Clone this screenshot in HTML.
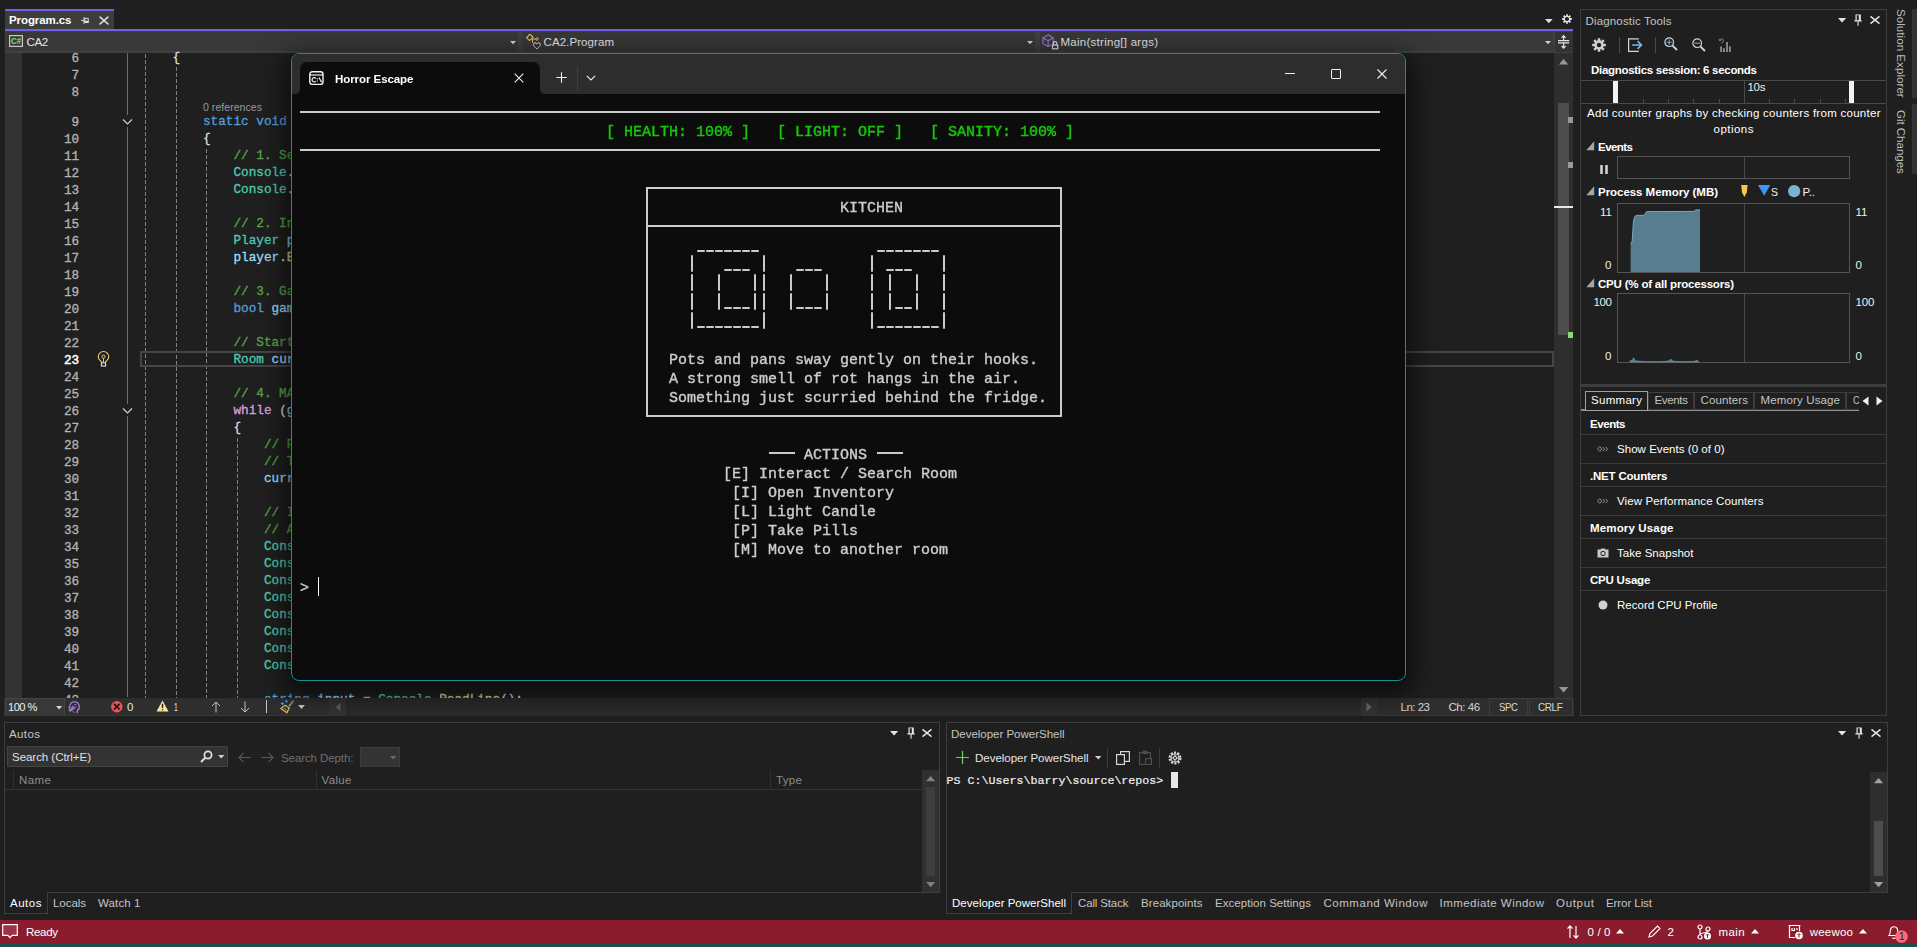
<!DOCTYPE html>
<html><head><meta charset="utf-8"><title>Program.cs - CA2</title>
<style>
html,body{margin:0;padding:0;background:#1f1f1f;}
body{width:1917px;height:947px;position:relative;overflow:hidden;font-family:"Liberation Sans",sans-serif;font-size:12px;color:#d6d6d6;}
body div,body svg,.t{position:absolute;box-sizing:border-box;}
.t{white-space:pre;display:block;}
svg{overflow:visible;}
.m{font-family:"Liberation Mono",monospace;-webkit-text-stroke:0.32px currentColor;}
pre{margin:0;font-family:"Liberation Mono",monospace;}

</style></head>
<body>
<div style="left:5px;top:9px;width:109px;height:2px;background:#7160e8;"></div>
<div style="left:5px;top:11px;width:109px;height:18px;background:#3d3d3d;"></div>
<span class="t" style="font-size:11.52px;color:#ffffff;height:17px;line-height:17px;top:11.9px;font-weight:700;left:9px;letter-spacing:-0.097px;">Program.cs</span>
<svg style="left:81.2px;top:17px;" width="8" height="7" viewBox="0 0 8 7"><path d="M0 3.5H2.6" stroke="#e0e0e0" stroke-width="0.9"/><path d="M3 0.2V6.8" stroke="#e0e0e0" stroke-width="1.1"/><rect x="3.9" y="1.3" width="3.3" height="4.2" fill="none" stroke="#e0e0e0" stroke-width="0.9"/><rect x="3.5" y="3.8" width="4.1" height="2" fill="#e0e0e0"/></svg>
<svg style="left:99px;top:15.5px;" width="10" height="9" viewBox="0 0 10 9"><path d="M0.6 0.6L9.4 8.4M9.4 0.6L0.6 8.4" stroke="#dcdcdc" stroke-width="1.5" fill="none"/></svg>
<div style="left:5px;top:29px;width:1568px;height:2px;background:#7160e8;"></div>
<svg style="left:1545.2px;top:18.8px;" width="8" height="5" viewBox="0 0 8 5"><path d="M0 0H7.7L3.85 4.2Z" fill="#e0e0e0"/></svg>
<svg style="left:1562px;top:14px;" width="10" height="10" viewBox="0 0 14 14"><g fill="none" stroke="#e0e0e0" stroke-width="2.5"><path d="M7 0.2V13.8M0.2 7H13.8M2.2 2.2L11.8 11.8M11.8 2.2L2.2 11.8"/></g><circle cx="7" cy="7" r="4.7" fill="#e0e0e0"/><circle cx="7" cy="7" r="2.9" fill="#1f1f1f"/><circle cx="7" cy="7" r="1.9" fill="none" stroke="#e0e0e0" stroke-width="0.0"/></svg>
<div style="left:5px;top:31px;width:1568px;height:22px;background:#404040;"></div>
<div style="left:6px;top:32px;width:512px;height:19px;background:#383838;"></div>
<div style="left:523px;top:32px;width:512px;height:19px;background:#383838;"></div>
<div style="left:1040px;top:32px;width:513px;height:19px;background:#383838;"></div>
<svg style="left:9px;top:35px;" width="14" height="12" viewBox="0 0 14 12"><rect x="0.6" y="0.6" width="12.8" height="10.8" fill="#3a3a3a" stroke="#c8c8c8" stroke-width="1.2"/><text x="1.9" y="9.3" font-family="Liberation Sans" font-size="8.6" font-weight="700" fill="#85e085" textLength="10.2" lengthAdjust="spacingAndGlyphs">C#</text></svg>
<span class="t" style="font-size:11.52px;color:#e6e6e6;height:17px;line-height:17px;top:33.5px;left:26.5px;letter-spacing:-0.353px;">CA2</span>
<svg style="left:510.2px;top:41px;" width="6" height="4" viewBox="0 0 6 4"><path d="M0 0H6L3 3.3Z" fill="#d0d0d0"/></svg>
<svg style="left:526px;top:33px;" width="16" height="17" viewBox="0 0 16 17"><path d="M0.5 4.8L3.8 1.3L7 4.1L3.7 7.6Z" fill="none" stroke="#e8c070" stroke-width="1.1"/><path d="M5.6 6H9.6M6.5 6V9.8" stroke="#e8c070" stroke-width="1" fill="none"/><circle cx="10.9" cy="6" r="1.2" fill="none" stroke="#e8c070" stroke-width="0.9"/><path d="M10.9 15.8C8.6 14 7.2 12.8 7.4 11.2C7.7 9.4 10 9.3 10.9 10.9C11.8 9.3 14.1 9.4 14.4 11.2C14.6 12.8 13.2 14 10.9 15.8Z" fill="#383838" stroke="#dedede" stroke-width="1"/></svg>
<span class="t" style="font-size:11.52px;color:#e6e6e6;height:17px;line-height:17px;top:33.9px;left:543.5px;letter-spacing:0.073px;">CA2.Program</span>
<svg style="left:1027.2px;top:41px;" width="6" height="4" viewBox="0 0 6 4"><path d="M0 0H6L3 3.3Z" fill="#d0d0d0"/></svg>
<svg style="left:1042px;top:34px;" width="17" height="16" viewBox="0 0 17 16"><path d="M6.1 0.9L11.2 3.8V9.7L6.1 12.6L1 9.7V3.8Z M1 3.8L6.1 6.7L11.2 3.8M6.1 6.7V12.6" fill="none" stroke="#9670c0" stroke-width="1.3"/><rect x="9.3" y="9.9" width="7.6" height="6" fill="#383838"/><rect x="10.5" y="11" width="5.2" height="3.8" fill="none" stroke="#dcdcdc" stroke-width="1.3"/><path d="M11.4 10.8V9.3A1.7 1.7 0 0 1 14.8 9.3V10.8" fill="none" stroke="#dcdcdc" stroke-width="1.2"/></svg>
<span class="t" style="font-size:11.52px;color:#e6e6e6;height:17px;line-height:17px;top:33.9px;left:1060.5px;letter-spacing:0.261px;">Main(string[] args)</span>
<svg style="left:1544.8px;top:41px;" width="6" height="4" viewBox="0 0 6 4"><path d="M0 0H6L3 3.3Z" fill="#d0d0d0"/></svg>
<div style="left:1555px;top:32px;width:18px;height:20px;background:#323232;"></div>
<svg style="left:1558px;top:34.5px;" width="12" height="14" viewBox="0 0 12 14"><path d="M0 5.6H11.2M0 7.9H11.2M5.6 0.8V5M5.6 8.5V13M3.6 2.8L5.6 0.7L7.6 2.8M3.6 11L5.6 13.1L7.6 11" stroke="#e4e4e4" stroke-width="1.15" fill="none"/></svg>
<div style="left:5px;top:53px;width:17px;height:645px;background:#333333;"></div>
<div style="left:1554.2px;top:53px;width:18.8px;height:645px;background:#2e2e2e;"></div>
<svg style="left:1558.8px;top:58.8px;" width="10" height="6" viewBox="0 0 10 6"><path d="M0 5.5H9.2L4.6 0Z" fill="#999999"/></svg>
<svg style="left:1558.8px;top:686.7px;" width="10" height="6" viewBox="0 0 10 6"><path d="M0 0H9.2L4.6 5.5Z" fill="#999999"/></svg>
<div style="left:1558px;top:103px;width:11px;height:232px;background:#4d4d4d;"></div>
<div style="left:1568px;top:117px;width:5px;height:6px;background:#9a9a9a;"></div>
<div style="left:1568px;top:162px;width:5px;height:6px;background:#9a9a9a;"></div>
<div style="left:1554px;top:206px;width:19px;height:2px;background:#e8e8e8;"></div>
<div style="left:1568px;top:332px;width:5px;height:6px;background:#8bd67a;"></div>
<div style="left:127px;top:53px;width:1px;height:644px;background:#6e6e6e;"></div>
<div style="left:145px;top:54.2px;width:1px;height:643.8px;background:repeating-linear-gradient(to bottom,#808080 0,#808080 4.2px,transparent 4.2px,transparent 6px);"></div>
<div style="left:176px;top:67.3px;width:1px;height:630.7px;background:repeating-linear-gradient(to bottom,#808080 0,#808080 4.2px,transparent 4.2px,transparent 6px);"></div>
<div style="left:206px;top:148.5px;width:1px;height:549.5px;background:repeating-linear-gradient(to bottom,#808080 0,#808080 4.2px,transparent 4.2px,transparent 6px);"></div>
<div style="left:237px;top:437.7px;width:1px;height:260.3px;background:repeating-linear-gradient(to bottom,#808080 0,#808080 4.2px,transparent 4.2px,transparent 6px);"></div>
<div style="left:140px;top:351px;width:1414px;height:16px;border:2px solid #464646;"></div>
<span class="t m" style="font-size:12.7px;color:#b4b4b4;height:17px;line-height:17px;top:50px;right:1837.8px;">6</span>
<span class="t m" style="font-size:12.7px;color:#dcdcdc;height:17px;line-height:17px;top:48.5px;left:172.48px;letter-spacing:0px;">{</span>
<span class="t m" style="font-size:12.7px;color:#b4b4b4;height:17px;line-height:17px;top:67px;right:1837.8px;">7</span>
<span class="t m" style="font-size:12.7px;color:#b4b4b4;height:17px;line-height:17px;top:84px;right:1837.8px;">8</span>
<span class="t m" style="font-size:12.7px;color:#b4b4b4;height:17px;line-height:17px;top:114px;right:1837.8px;">9</span>
<span class="t m" style="font-size:12.7px;color:#569cd6;height:17px;line-height:17px;top:112.5px;left:202.96px;letter-spacing:0px;">static</span>
<span class="t m" style="font-size:12.7px;color:#569cd6;height:17px;line-height:17px;top:112.5px;left:256.3px;letter-spacing:0px;">void</span>
<span class="t m" style="font-size:12.7px;color:#b4b4b4;height:17px;line-height:17px;top:131px;right:1837.8px;">10</span>
<span class="t m" style="font-size:12.7px;color:#dcdcdc;height:17px;line-height:17px;top:129.5px;left:202.96px;letter-spacing:0px;">{</span>
<span class="t m" style="font-size:12.7px;color:#b4b4b4;height:17px;line-height:17px;top:148px;right:1837.8px;">11</span>
<span class="t m" style="font-size:12.7px;color:#57a64a;height:17px;line-height:17px;top:146.5px;left:233.44px;letter-spacing:0px;">// 1. Set</span>
<span class="t m" style="font-size:12.7px;color:#b4b4b4;height:17px;line-height:17px;top:165px;right:1837.8px;">12</span>
<span class="t m" style="font-size:12.7px;color:#4ec9b0;height:17px;line-height:17px;top:163.5px;left:233.44px;letter-spacing:0px;">Console</span>
<span class="t m" style="font-size:12.7px;color:#dcdcdc;height:17px;line-height:17px;top:163.5px;left:286.78px;letter-spacing:0px;">.</span>
<span class="t m" style="font-size:12.7px;color:#b4b4b4;height:17px;line-height:17px;top:182px;right:1837.8px;">13</span>
<span class="t m" style="font-size:12.7px;color:#4ec9b0;height:17px;line-height:17px;top:180.5px;left:233.44px;letter-spacing:0px;">Console</span>
<span class="t m" style="font-size:12.7px;color:#dcdcdc;height:17px;line-height:17px;top:180.5px;left:286.78px;letter-spacing:0px;">.</span>
<span class="t m" style="font-size:12.7px;color:#b4b4b4;height:17px;line-height:17px;top:199px;right:1837.8px;">14</span>
<span class="t m" style="font-size:12.7px;color:#b4b4b4;height:17px;line-height:17px;top:216px;right:1837.8px;">15</span>
<span class="t m" style="font-size:12.7px;color:#57a64a;height:17px;line-height:17px;top:214.5px;left:233.44px;letter-spacing:0px;">// 2. Ini</span>
<span class="t m" style="font-size:12.7px;color:#b4b4b4;height:17px;line-height:17px;top:233px;right:1837.8px;">16</span>
<span class="t m" style="font-size:12.7px;color:#4ec9b0;height:17px;line-height:17px;top:231.5px;left:233.44px;letter-spacing:0px;">Player</span>
<span class="t m" style="font-size:12.7px;color:#9cdcfe;height:17px;line-height:17px;top:231.5px;left:286.78px;letter-spacing:0px;">p</span>
<span class="t m" style="font-size:12.7px;color:#b4b4b4;height:17px;line-height:17px;top:250px;right:1837.8px;">17</span>
<span class="t m" style="font-size:12.7px;color:#9cdcfe;height:17px;line-height:17px;top:248.5px;left:233.44px;letter-spacing:0px;">player</span>
<span class="t m" style="font-size:12.7px;color:#dcdcdc;height:17px;line-height:17px;top:248.5px;left:279.16px;letter-spacing:0px;">.</span>
<span class="t m" style="font-size:12.7px;color:#dcdcaa;height:17px;line-height:17px;top:248.5px;left:286.78px;letter-spacing:0px;">E</span>
<span class="t m" style="font-size:12.7px;color:#b4b4b4;height:17px;line-height:17px;top:267px;right:1837.8px;">18</span>
<span class="t m" style="font-size:12.7px;color:#b4b4b4;height:17px;line-height:17px;top:284px;right:1837.8px;">19</span>
<span class="t m" style="font-size:12.7px;color:#57a64a;height:17px;line-height:17px;top:282.5px;left:233.44px;letter-spacing:0px;">// 3. Gam</span>
<span class="t m" style="font-size:12.7px;color:#b4b4b4;height:17px;line-height:17px;top:301px;right:1837.8px;">20</span>
<span class="t m" style="font-size:12.7px;color:#569cd6;height:17px;line-height:17px;top:299.5px;left:233.44px;letter-spacing:0px;">bool</span>
<span class="t m" style="font-size:12.7px;color:#9cdcfe;height:17px;line-height:17px;top:299.5px;left:271.54px;letter-spacing:0px;">game</span>
<span class="t m" style="font-size:12.7px;color:#b4b4b4;height:17px;line-height:17px;top:318px;right:1837.8px;">21</span>
<span class="t m" style="font-size:12.7px;color:#b4b4b4;height:17px;line-height:17px;top:335px;right:1837.8px;">22</span>
<span class="t m" style="font-size:12.7px;color:#57a64a;height:17px;line-height:17px;top:333.5px;left:233.44px;letter-spacing:0px;">// Start</span>
<span class="t m" style="font-size:12.7px;color:#ffffff;height:17px;line-height:17px;top:352px;right:1837.8px;-webkit-text-stroke:0.5px #ffffff;">23</span>
<span class="t m" style="font-size:12.7px;color:#4ec9b0;height:17px;line-height:17px;top:350.5px;left:233.44px;letter-spacing:0px;">Room</span>
<span class="t m" style="font-size:12.7px;color:#9cdcfe;height:17px;line-height:17px;top:350.5px;left:271.54px;letter-spacing:0px;">curr</span>
<span class="t m" style="font-size:12.7px;color:#b4b4b4;height:17px;line-height:17px;top:369px;right:1837.8px;">24</span>
<span class="t m" style="font-size:12.7px;color:#b4b4b4;height:17px;line-height:17px;top:386px;right:1837.8px;">25</span>
<span class="t m" style="font-size:12.7px;color:#57a64a;height:17px;line-height:17px;top:384.5px;left:233.44px;letter-spacing:0px;">// 4. MAI</span>
<span class="t m" style="font-size:12.7px;color:#b4b4b4;height:17px;line-height:17px;top:403px;right:1837.8px;">26</span>
<span class="t m" style="font-size:12.7px;color:#d8a0df;height:17px;line-height:17px;top:401.5px;left:233.44px;letter-spacing:0px;">while</span>
<span class="t m" style="font-size:12.7px;color:#dcdcdc;height:17px;line-height:17px;top:401.5px;left:279.16px;letter-spacing:0px;">(</span>
<span class="t m" style="font-size:12.7px;color:#9cdcfe;height:17px;line-height:17px;top:401.5px;left:286.78px;letter-spacing:0px;">g</span>
<span class="t m" style="font-size:12.7px;color:#b4b4b4;height:17px;line-height:17px;top:420px;right:1837.8px;">27</span>
<span class="t m" style="font-size:12.7px;color:#dcdcdc;height:17px;line-height:17px;top:418.5px;left:233.44px;letter-spacing:0px;">{</span>
<span class="t m" style="font-size:12.7px;color:#b4b4b4;height:17px;line-height:17px;top:437px;right:1837.8px;">28</span>
<span class="t m" style="font-size:12.7px;color:#57a64a;height:17px;line-height:17px;top:435.5px;left:263.92px;letter-spacing:0px;">// Pr</span>
<span class="t m" style="font-size:12.7px;color:#b4b4b4;height:17px;line-height:17px;top:454px;right:1837.8px;">29</span>
<span class="t m" style="font-size:12.7px;color:#57a64a;height:17px;line-height:17px;top:452.5px;left:263.92px;letter-spacing:0px;">// Th</span>
<span class="t m" style="font-size:12.7px;color:#b4b4b4;height:17px;line-height:17px;top:471px;right:1837.8px;">30</span>
<span class="t m" style="font-size:12.7px;color:#9cdcfe;height:17px;line-height:17px;top:469.5px;left:263.92px;letter-spacing:0px;">curre</span>
<span class="t m" style="font-size:12.7px;color:#b4b4b4;height:17px;line-height:17px;top:488px;right:1837.8px;">31</span>
<span class="t m" style="font-size:12.7px;color:#b4b4b4;height:17px;line-height:17px;top:505px;right:1837.8px;">32</span>
<span class="t m" style="font-size:12.7px;color:#57a64a;height:17px;line-height:17px;top:503.5px;left:263.92px;letter-spacing:0px;">// In</span>
<span class="t m" style="font-size:12.7px;color:#b4b4b4;height:17px;line-height:17px;top:522px;right:1837.8px;">33</span>
<span class="t m" style="font-size:12.7px;color:#57a64a;height:17px;line-height:17px;top:520.5px;left:263.92px;letter-spacing:0px;">// Al</span>
<span class="t m" style="font-size:12.7px;color:#b4b4b4;height:17px;line-height:17px;top:539px;right:1837.8px;">34</span>
<span class="t m" style="font-size:12.7px;color:#4ec9b0;height:17px;line-height:17px;top:537.5px;left:263.92px;letter-spacing:0px;">Conso</span>
<span class="t m" style="font-size:12.7px;color:#b4b4b4;height:17px;line-height:17px;top:556px;right:1837.8px;">35</span>
<span class="t m" style="font-size:12.7px;color:#4ec9b0;height:17px;line-height:17px;top:554.5px;left:263.92px;letter-spacing:0px;">Conso</span>
<span class="t m" style="font-size:12.7px;color:#b4b4b4;height:17px;line-height:17px;top:573px;right:1837.8px;">36</span>
<span class="t m" style="font-size:12.7px;color:#4ec9b0;height:17px;line-height:17px;top:571.5px;left:263.92px;letter-spacing:0px;">Conso</span>
<span class="t m" style="font-size:12.7px;color:#b4b4b4;height:17px;line-height:17px;top:590px;right:1837.8px;">37</span>
<span class="t m" style="font-size:12.7px;color:#4ec9b0;height:17px;line-height:17px;top:588.5px;left:263.92px;letter-spacing:0px;">Conso</span>
<span class="t m" style="font-size:12.7px;color:#b4b4b4;height:17px;line-height:17px;top:607px;right:1837.8px;">38</span>
<span class="t m" style="font-size:12.7px;color:#4ec9b0;height:17px;line-height:17px;top:605.5px;left:263.92px;letter-spacing:0px;">Conso</span>
<span class="t m" style="font-size:12.7px;color:#b4b4b4;height:17px;line-height:17px;top:624px;right:1837.8px;">39</span>
<span class="t m" style="font-size:12.7px;color:#4ec9b0;height:17px;line-height:17px;top:622.5px;left:263.92px;letter-spacing:0px;">Conso</span>
<span class="t m" style="font-size:12.7px;color:#b4b4b4;height:17px;line-height:17px;top:641px;right:1837.8px;">40</span>
<span class="t m" style="font-size:12.7px;color:#4ec9b0;height:17px;line-height:17px;top:639.5px;left:263.92px;letter-spacing:0px;">Conso</span>
<span class="t m" style="font-size:12.7px;color:#b4b4b4;height:17px;line-height:17px;top:658px;right:1837.8px;">41</span>
<span class="t m" style="font-size:12.7px;color:#4ec9b0;height:17px;line-height:17px;top:656.5px;left:263.92px;letter-spacing:0px;">Conso</span>
<span class="t m" style="font-size:12.7px;color:#b4b4b4;height:17px;line-height:17px;top:675px;right:1837.8px;">42</span>
<span class="t m" style="font-size:12.7px;color:#b4b4b4;height:17px;line-height:17px;top:692px;right:1837.8px;">43</span>
<span class="t m" style="font-size:12.7px;color:#569cd6;height:17px;line-height:17px;top:690.5px;left:263.92px;letter-spacing:0px;">string</span>
<span class="t m" style="font-size:12.7px;color:#9cdcfe;height:17px;line-height:17px;top:690.5px;left:317.26px;letter-spacing:0px;">input</span>
<span class="t m" style="font-size:12.7px;color:#b4b4b4;height:17px;line-height:17px;top:690.5px;left:362.98px;letter-spacing:0px;">=</span>
<span class="t m" style="font-size:12.7px;color:#4ec9b0;height:17px;line-height:17px;top:690.5px;left:378.22px;letter-spacing:0px;">Console</span>
<span class="t m" style="font-size:12.7px;color:#dcdcdc;height:17px;line-height:17px;top:690.5px;left:431.56px;letter-spacing:0px;">.</span>
<span class="t m" style="font-size:12.7px;color:#dcdcaa;height:17px;line-height:17px;top:690.5px;left:439.18px;letter-spacing:0px;">ReadLine</span>
<span class="t m" style="font-size:12.7px;color:#dcdcdc;height:17px;line-height:17px;top:690.5px;left:500.14px;letter-spacing:0px;">();</span>
<span class="t" style="font-size:10.56px;color:#9a9a9a;height:15px;line-height:15px;top:99.9px;left:203px;letter-spacing:0.033px;">0 references</span>
<div style="left:122px;top:115px;width:11px;height:12px;background:#1f1f1f;"></div>
<svg style="left:122px;top:117.7px;" width="11" height="8" viewBox="0 0 11 8"><path d="M1 1.5L5.5 6L10 1.5" stroke="#d0d0d0" stroke-width="1.2" fill="none"/></svg>
<div style="left:122px;top:404px;width:11px;height:12px;background:#1f1f1f;"></div>
<svg style="left:122px;top:406.7px;" width="11" height="8" viewBox="0 0 11 8"><path d="M1 1.5L5.5 6L10 1.5" stroke="#d0d0d0" stroke-width="1.2" fill="none"/></svg>
<svg style="left:97px;top:350.6px;" width="13" height="17" viewBox="0 0 13 17"><path d="M4.7 11.6C4.7 9.8 1.2 9 1.2 5.8A5.3 5.3 0 0 1 11.8 5.8C11.8 9 8.3 9.8 8.3 11.6" fill="none" stroke="#e9cf7a" stroke-width="1.1"/><circle cx="6.5" cy="5.6" r="1.6" fill="none" stroke="#e9cf7a" stroke-width="1"/><path d="M6.5 7.2V11.4" stroke="#e9cf7a" stroke-width="1"/><rect x="4.4" y="11.8" width="4.2" height="3.2" fill="none" stroke="#e0e0e0" stroke-width="1.1"/></svg>
<div style="left:4px;top:698px;width:1570px;height:18px;background:#2e2e2e;"></div>
<div style="left:5px;top:698px;width:60px;height:18px;background:#383838;border:1px solid #454545;"></div>
<span class="t" style="font-size:11.52px;color:#f0f0f0;height:17px;line-height:17px;top:698.9px;left:7.5px;letter-spacing:-0.550px;transform-origin:0 50%;transform:scaleX(0.9686);">100 %</span>
<svg style="left:56px;top:706px;" width="7" height="4" viewBox="0 0 7 4"><path d="M0 0H6.2L3.1 3.6Z" fill="#d8d8d8"/></svg>
<svg style="left:68px;top:700.5px;" width="12" height="13" viewBox="0 0 12 13"><path d="M9.2 12.3V9.6C10.8 8.6 11.4 7 11.2 5.2C10.8 2.4 8.6 0.8 6.2 0.9C3.8 1 2.2 2.6 2 4.6L0.9 6.6L2.1 7.1" fill="none" stroke="#a57fd6" stroke-width="1.3"/><path d="M5.8 4.2A1.6 1.6 0 0 1 8.6 4.4M6 6.2H8.4" fill="none" stroke="#a57fd6" stroke-width="0.9"/><path d="M0.8 9.2L2.3 10.6L4.4 8.4A1.8 1.8 0 0 0 6.6 6.4L5.4 7.2L4.7 6.5L5.5 5.3A1.8 1.8 0 0 0 3.4 7.5Z M4.2 9.5L6.8 12.4" fill="#a57fd6" stroke="#a57fd6" stroke-width="0.9"/></svg>
<svg style="left:110.7px;top:701px;" width="12" height="12" viewBox="0 0 12 12"><circle cx="5.8" cy="5.7" r="5.7" fill="#f0505a"/><path d="M3 2.9L8.6 8.5M8.6 2.9L3 8.5" stroke="#151515" stroke-width="1.7"/></svg>
<span class="t" style="font-size:11.52px;color:#e6e6e6;height:17px;line-height:17px;top:698.9px;left:127px;letter-spacing:0.594px;">0</span>
<svg style="left:156.2px;top:700.4px;" width="13" height="12" viewBox="0 0 13 12"><path d="M6.5 0.5L12.5 11.5H0.5Z" fill="#fce4a0"/><path d="M6.5 3.8V8" stroke="#1f1f1f" stroke-width="1.5"/><circle cx="6.5" cy="9.8" r="0.8" fill="#1f1f1f"/></svg>
<span class="t" style="font-size:11.52px;color:#e6e6e6;height:17px;line-height:17px;top:698.9px;left:174px;letter-spacing:-0.550px;transform-origin:0 50%;transform:scaleX(0.5932);">1</span>
<svg style="left:211px;top:701px;" width="10" height="12" viewBox="0 0 10 12"><path d="M5 11.5V1M1 5L5 1L9 5" stroke="#c4c4c4" stroke-width="1" fill="none"/></svg>
<svg style="left:240px;top:701px;" width="10" height="12" viewBox="0 0 10 12"><path d="M5 0.5V11M1 7L5 11L9 7" stroke="#c4c4c4" stroke-width="1" fill="none"/></svg>
<div style="left:266px;top:700px;width:1px;height:13px;background:#c8c8c8;"></div>
<div style="left:4px;top:715px;width:1570px;height:1px;background:#383838;"></div>
<svg style="left:280px;top:699px;" width="15" height="15" viewBox="0 0 15 15"><path d="M9.2 7L13.6 1.7" stroke="#c8c8c8" stroke-width="1.7" stroke-dasharray="1.1 0.5"/><path d="M5 6.3L9.3 8.9L6.8 13.8L1 9.5Z" fill="none" stroke="#d8b46a" stroke-width="1.3"/><path d="M4.2 9.3L6.4 10.8" stroke="#d8b46a" stroke-width="1"/><path d="M2.4 3V6.2M0.8 4.6H4M6.5 1V3.6M5.2 2.3H7.8" stroke="#4aa3e8" stroke-width="1"/></svg>
<svg style="left:298px;top:705px;" width="8" height="5" viewBox="0 0 8 5"><path d="M0 0H7L3.5 4Z" fill="#c8c8c8"/></svg>
<div style="left:329px;top:698px;width:17px;height:18px;background:#333333;"></div>
<div style="left:346px;top:698px;width:1015px;height:18px;background:#2b2b2b;"></div>
<svg style="left:335px;top:702px;" width="6" height="10" viewBox="0 0 6 10"><path d="M5.5 0.5V9.5L0.5 5Z" fill="#5a5a5a"/></svg>
<div style="left:1361px;top:698px;width:17px;height:18px;background:#333333;"></div>
<svg style="left:1366.4px;top:702px;" width="6" height="10" viewBox="0 0 6 10"><path d="M0.5 0.5V9.5L5.5 5Z" fill="#6a6a6a"/></svg>
<span class="t" style="font-size:11.52px;color:#d6d6d6;height:17px;line-height:17px;top:698.9px;left:1400.5px;letter-spacing:-0.506px;">Ln: 23</span>
<span class="t" style="font-size:11.52px;color:#d6d6d6;height:17px;line-height:17px;top:698.9px;left:1448.5px;letter-spacing:-0.447px;">Ch: 46</span>
<div style="left:1489px;top:698px;width:39px;height:18px;border:1px solid #3d3d3d;"></div>
<span class="t" style="font-size:11.52px;color:#d6d6d6;height:17px;line-height:17px;top:698.9px;left:1499.3px;letter-spacing:-0.550px;transform-origin:0 50%;transform:scaleX(0.8367);">SPC</span>
<div style="left:1528.5px;top:698px;width:44px;height:18px;border:1px solid #3d3d3d;"></div>
<span class="t" style="font-size:11.52px;color:#d6d6d6;height:17px;line-height:17px;top:698.9px;left:1538.4px;letter-spacing:-0.550px;transform-origin:0 50%;transform:scaleX(0.8724);">CRLF</span>
<div style="left:291px;top:53px;width:1115px;height:628px;background:#0c0c0c;border:1px solid #11929b;border-radius:8px;box-shadow:0 8px 26px 5px rgba(0,0,0,0.68);overflow:hidden;"><div style="left:0;top:0;width:1113px;height:40px;background:#2d2d2d;"></div><div style="left:8px;top:8px;width:240px;height:33px;background:#0c0c0c;border-radius:7px 7px 0 0;"></div><div style="left:2px;top:34px;width:6px;height:6px;background:radial-gradient(circle at 0 0,#2d2d2d 6px,#0c0c0c 6.5px);"></div><div style="left:248px;top:34px;width:6px;height:6px;background:radial-gradient(circle at 100% 0,#2d2d2d 6px,#0c0c0c 6.5px);"></div></div>
<svg style="left:309px;top:71px;" width="15" height="14" viewBox="0 0 15 14"><rect x="0.8" y="0.8" width="13.2" height="12.6" rx="2.4" fill="#0c0c0c" stroke="#f4f4f4" stroke-width="1.4"/><path d="M1 4H14" stroke="#f4f4f4" stroke-width="1.2"/><path d="M6.7 7.5A2 2.2 0 1 0 6.7 10.1" fill="none" stroke="#f4f4f4" stroke-width="1.2"/><path d="M8.3 7.3V8.4M8.3 9.4V10.5" stroke="#f4f4f4" stroke-width="1.1"/><path d="M9.9 6.5L12.6 11.1" stroke="#f4f4f4" stroke-width="1.2"/></svg>
<span class="t" style="font-size:11.52px;color:#ffffff;height:17px;line-height:17px;top:70.7px;font-weight:700;left:335px;letter-spacing:-0.073px;will-change:transform;">Horror Escape</span>
<svg style="left:514px;top:73px;" width="10" height="10" viewBox="0 0 10 10"><path d="M0.7 0.7L9.3 9.3M9.3 0.7L0.7 9.3" stroke="#f0f0f0" stroke-width="1.1" fill="none"/></svg>
<svg style="left:556px;top:72px;" width="11" height="11" viewBox="0 0 11 11"><path d="M5.5 0.3V10.7M0.3 5.5H10.7" stroke="#f0f0f0" stroke-width="1.1" fill="none"/></svg>
<div style="left:577px;top:66px;width:1px;height:24px;background:#3e3e3e;"></div>
<svg style="left:586px;top:75px;" width="10" height="6" viewBox="0 0 10 6"><path d="M0.8 0.8L5 5L9.2 0.8" stroke="#f0f0f0" stroke-width="1.1" fill="none"/></svg>
<div style="left:1285px;top:73px;width:10px;height:1px;background:#f0f0f0;"></div>
<div style="left:1331px;top:69px;width:10px;height:10px;border:1px solid #f0f0f0;border-radius:1px;"></div>
<svg style="left:1377px;top:69px;" width="10" height="10" viewBox="0 0 10 10"><path d="M0.5 0.5L9.5 9.5M9.5 0.5L0.5 9.5" stroke="#f0f0f0" stroke-width="1.1" fill="none"/></svg>
<div style="left:300px;top:111px;width:1080px;height:2px;background:#cccccc;"></div>
<div style="left:300px;top:149px;width:1080px;height:2px;background:#cccccc;"></div>
<span class="t m" style="font-size:15px;color:#16c60c;height:19px;line-height:19px;top:122.8px;left:606px;-webkit-text-stroke:0.45px #16c60c;will-change:transform;">[ HEALTH: 100% ]   [ LIGHT: OFF ]   [ SANITY: 100% ]</span>
<div style="left:645.5px;top:186.5px;width:416.0px;height:230.5px;border:2px solid #cccccc;"></div>
<div style="left:645.5px;top:224.5px;width:416.0px;height:2px;background:#cccccc;"></div>
<span class="t m" style="font-size:15px;color:#cccccc;height:19px;line-height:19px;top:198.8px;left:840px;will-change:transform;-webkit-text-stroke:0.38px #cccccc;">KITCHEN</span>
<div style="left:696.5px;top:249.9px;width:8.1px;height:2.1px;background:#cacaca;border-radius:1px;"></div>
<div style="left:705.5px;top:249.9px;width:8.1px;height:2.1px;background:#cacaca;border-radius:1px;"></div>
<div style="left:714.5px;top:249.9px;width:8.1px;height:2.1px;background:#cacaca;border-radius:1px;"></div>
<div style="left:723.5px;top:249.9px;width:8.1px;height:2.1px;background:#cacaca;border-radius:1px;"></div>
<div style="left:732.5px;top:249.9px;width:8.1px;height:2.1px;background:#cacaca;border-radius:1px;"></div>
<div style="left:741.5px;top:249.9px;width:8.1px;height:2.1px;background:#cacaca;border-radius:1px;"></div>
<div style="left:750.5px;top:249.9px;width:8.1px;height:2.1px;background:#cacaca;border-radius:1px;"></div>
<div style="left:876.5px;top:249.9px;width:8.1px;height:2.1px;background:#cacaca;border-radius:1px;"></div>
<div style="left:885.5px;top:249.9px;width:8.1px;height:2.1px;background:#cacaca;border-radius:1px;"></div>
<div style="left:894.5px;top:249.9px;width:8.1px;height:2.1px;background:#cacaca;border-radius:1px;"></div>
<div style="left:903.5px;top:249.9px;width:8.1px;height:2.1px;background:#cacaca;border-radius:1px;"></div>
<div style="left:912.5px;top:249.9px;width:8.1px;height:2.1px;background:#cacaca;border-radius:1px;"></div>
<div style="left:921.5px;top:249.9px;width:8.1px;height:2.1px;background:#cacaca;border-radius:1px;"></div>
<div style="left:930.5px;top:249.9px;width:8.1px;height:2.1px;background:#cacaca;border-radius:1px;"></div>
<div style="left:690.8px;top:254.9px;width:2.1px;height:17px;background:#cacaca;border-radius:1px;"></div>
<div style="left:723.5px;top:268.9px;width:8.1px;height:2.1px;background:#cacaca;border-radius:1px;"></div>
<div style="left:732.5px;top:268.9px;width:8.1px;height:2.1px;background:#cacaca;border-radius:1px;"></div>
<div style="left:741.5px;top:268.9px;width:8.1px;height:2.1px;background:#cacaca;border-radius:1px;"></div>
<div style="left:762.8px;top:254.9px;width:2.1px;height:17px;background:#cacaca;border-radius:1px;"></div>
<div style="left:795.5px;top:268.9px;width:8.1px;height:2.1px;background:#cacaca;border-radius:1px;"></div>
<div style="left:804.5px;top:268.9px;width:8.1px;height:2.1px;background:#cacaca;border-radius:1px;"></div>
<div style="left:813.5px;top:268.9px;width:8.1px;height:2.1px;background:#cacaca;border-radius:1px;"></div>
<div style="left:870.8px;top:254.9px;width:2.1px;height:17px;background:#cacaca;border-radius:1px;"></div>
<div style="left:885.5px;top:268.9px;width:8.1px;height:2.1px;background:#cacaca;border-radius:1px;"></div>
<div style="left:894.5px;top:268.9px;width:8.1px;height:2.1px;background:#cacaca;border-radius:1px;"></div>
<div style="left:903.5px;top:268.9px;width:8.1px;height:2.1px;background:#cacaca;border-radius:1px;"></div>
<div style="left:942.8px;top:254.9px;width:2.1px;height:17px;background:#cacaca;border-radius:1px;"></div>
<div style="left:690.8px;top:273.9px;width:2.1px;height:17px;background:#cacaca;border-radius:1px;"></div>
<div style="left:717.8px;top:273.9px;width:2.1px;height:17px;background:#cacaca;border-radius:1px;"></div>
<div style="left:753.8px;top:273.9px;width:2.1px;height:17px;background:#cacaca;border-radius:1px;"></div>
<div style="left:762.8px;top:273.9px;width:2.1px;height:17px;background:#cacaca;border-radius:1px;"></div>
<div style="left:789.8px;top:273.9px;width:2.1px;height:17px;background:#cacaca;border-radius:1px;"></div>
<div style="left:825.8px;top:273.9px;width:2.1px;height:17px;background:#cacaca;border-radius:1px;"></div>
<div style="left:870.8px;top:273.9px;width:2.1px;height:17px;background:#cacaca;border-radius:1px;"></div>
<div style="left:888.8px;top:273.9px;width:2.1px;height:17px;background:#cacaca;border-radius:1px;"></div>
<div style="left:915.8px;top:273.9px;width:2.1px;height:17px;background:#cacaca;border-radius:1px;"></div>
<div style="left:942.8px;top:273.9px;width:2.1px;height:17px;background:#cacaca;border-radius:1px;"></div>
<div style="left:690.8px;top:292.9px;width:2.1px;height:17px;background:#cacaca;border-radius:1px;"></div>
<div style="left:717.8px;top:292.9px;width:2.1px;height:17px;background:#cacaca;border-radius:1px;"></div>
<div style="left:723.5px;top:306.9px;width:8.1px;height:2.1px;background:#cacaca;border-radius:1px;"></div>
<div style="left:732.5px;top:306.9px;width:8.1px;height:2.1px;background:#cacaca;border-radius:1px;"></div>
<div style="left:741.5px;top:306.9px;width:8.1px;height:2.1px;background:#cacaca;border-radius:1px;"></div>
<div style="left:753.8px;top:292.9px;width:2.1px;height:17px;background:#cacaca;border-radius:1px;"></div>
<div style="left:762.8px;top:292.9px;width:2.1px;height:17px;background:#cacaca;border-radius:1px;"></div>
<div style="left:789.8px;top:292.9px;width:2.1px;height:17px;background:#cacaca;border-radius:1px;"></div>
<div style="left:795.5px;top:306.9px;width:8.1px;height:2.1px;background:#cacaca;border-radius:1px;"></div>
<div style="left:804.5px;top:306.9px;width:8.1px;height:2.1px;background:#cacaca;border-radius:1px;"></div>
<div style="left:813.5px;top:306.9px;width:8.1px;height:2.1px;background:#cacaca;border-radius:1px;"></div>
<div style="left:825.8px;top:292.9px;width:2.1px;height:17px;background:#cacaca;border-radius:1px;"></div>
<div style="left:870.8px;top:292.9px;width:2.1px;height:17px;background:#cacaca;border-radius:1px;"></div>
<div style="left:888.8px;top:292.9px;width:2.1px;height:17px;background:#cacaca;border-radius:1px;"></div>
<div style="left:894.5px;top:306.9px;width:8.1px;height:2.1px;background:#cacaca;border-radius:1px;"></div>
<div style="left:903.5px;top:306.9px;width:8.1px;height:2.1px;background:#cacaca;border-radius:1px;"></div>
<div style="left:915.8px;top:292.9px;width:2.1px;height:17px;background:#cacaca;border-radius:1px;"></div>
<div style="left:942.8px;top:292.9px;width:2.1px;height:17px;background:#cacaca;border-radius:1px;"></div>
<div style="left:690.8px;top:311.9px;width:2.1px;height:17px;background:#cacaca;border-radius:1px;"></div>
<div style="left:696.5px;top:325.9px;width:8.1px;height:2.1px;background:#cacaca;border-radius:1px;"></div>
<div style="left:705.5px;top:325.9px;width:8.1px;height:2.1px;background:#cacaca;border-radius:1px;"></div>
<div style="left:714.5px;top:325.9px;width:8.1px;height:2.1px;background:#cacaca;border-radius:1px;"></div>
<div style="left:723.5px;top:325.9px;width:8.1px;height:2.1px;background:#cacaca;border-radius:1px;"></div>
<div style="left:732.5px;top:325.9px;width:8.1px;height:2.1px;background:#cacaca;border-radius:1px;"></div>
<div style="left:741.5px;top:325.9px;width:8.1px;height:2.1px;background:#cacaca;border-radius:1px;"></div>
<div style="left:750.5px;top:325.9px;width:8.1px;height:2.1px;background:#cacaca;border-radius:1px;"></div>
<div style="left:762.8px;top:311.9px;width:2.1px;height:17px;background:#cacaca;border-radius:1px;"></div>
<div style="left:870.8px;top:311.9px;width:2.1px;height:17px;background:#cacaca;border-radius:1px;"></div>
<div style="left:876.5px;top:325.9px;width:8.1px;height:2.1px;background:#cacaca;border-radius:1px;"></div>
<div style="left:885.5px;top:325.9px;width:8.1px;height:2.1px;background:#cacaca;border-radius:1px;"></div>
<div style="left:894.5px;top:325.9px;width:8.1px;height:2.1px;background:#cacaca;border-radius:1px;"></div>
<div style="left:903.5px;top:325.9px;width:8.1px;height:2.1px;background:#cacaca;border-radius:1px;"></div>
<div style="left:912.5px;top:325.9px;width:8.1px;height:2.1px;background:#cacaca;border-radius:1px;"></div>
<div style="left:921.5px;top:325.9px;width:8.1px;height:2.1px;background:#cacaca;border-radius:1px;"></div>
<div style="left:930.5px;top:325.9px;width:8.1px;height:2.1px;background:#cacaca;border-radius:1px;"></div>
<div style="left:942.8px;top:311.9px;width:2.1px;height:17px;background:#cacaca;border-radius:1px;"></div>
<span class="t m" style="font-size:15px;color:#cccccc;height:19px;line-height:19px;top:350.8px;left:669px;will-change:transform;-webkit-text-stroke:0.38px #cccccc;">Pots and pans sway gently on their hooks.</span>
<span class="t m" style="font-size:15px;color:#cccccc;height:19px;line-height:19px;top:369.8px;left:669px;will-change:transform;-webkit-text-stroke:0.38px #cccccc;">A strong smell of rot hangs in the air.</span>
<span class="t m" style="font-size:15px;color:#cccccc;height:19px;line-height:19px;top:388.8px;left:669px;will-change:transform;-webkit-text-stroke:0.38px #cccccc;">Something just scurried behind the fridge.</span>
<span class="t m" style="font-size:15px;color:#cccccc;height:19px;line-height:19px;top:445.8px;left:768px;will-change:transform;-webkit-text-stroke:0.38px #cccccc;">    ACTIONS    </span>
<div style="left:768.5px;top:452.4px;width:26.2px;height:2px;background:#cacaca;"></div>
<div style="left:876.5px;top:452.4px;width:26.2px;height:2px;background:#cacaca;"></div>
<span class="t m" style="font-size:15px;color:#cccccc;height:19px;line-height:19px;top:464.8px;left:723px;will-change:transform;-webkit-text-stroke:0.38px #cccccc;">[E] Interact / Search Room</span>
<span class="t m" style="font-size:15px;color:#cccccc;height:19px;line-height:19px;top:483.8px;left:732px;will-change:transform;-webkit-text-stroke:0.38px #cccccc;">[I] Open Inventory</span>
<span class="t m" style="font-size:15px;color:#cccccc;height:19px;line-height:19px;top:502.8px;left:732px;will-change:transform;-webkit-text-stroke:0.38px #cccccc;">[L] Light Candle</span>
<span class="t m" style="font-size:15px;color:#cccccc;height:19px;line-height:19px;top:521.8px;left:732px;will-change:transform;-webkit-text-stroke:0.38px #cccccc;">[P] Take Pills</span>
<span class="t m" style="font-size:15px;color:#cccccc;height:19px;line-height:19px;top:540.8px;left:732px;will-change:transform;-webkit-text-stroke:0.38px #cccccc;">[M] Move to another room</span>
<span class="t m" style="font-size:15px;color:#cccccc;height:19px;line-height:19px;top:578.8px;left:300px;will-change:transform;-webkit-text-stroke:0.38px #cccccc;">&gt;</span>
<div style="left:318px;top:577px;width:1px;height:19px;background:#ffffff;"></div>
<div style="left:1580px;top:9px;width:307px;height:707px;background:#1f1f1f;border:1px solid #3d3d3d;"></div>
<span class="t" style="font-size:11.52px;color:#c4c4c4;height:17px;line-height:17px;top:12.9px;left:1585.5px;letter-spacing:0.157px;">Diagnostic Tools</span>
<svg style="left:1837.8000000000002px;top:18.2px;" width="8.2" height="4.4" viewBox="0 0 8.2 4.4"><path d="M0 0H8.2L4.1 4.4Z" fill="#e4e4e4"/></svg>
<svg style="left:1854.45px;top:14.399999999999999px;" width="8" height="12" viewBox="0 0 8 12"><path d="M1.5 0.4H6.8V6.3H7.7V7.6H4.6V11.7H3.5V7.6H0.4V6.3H1.5Z M2.7 1.3V6.3H4.8V1.3Z" fill="#e8e8e8" fill-rule="evenodd"/></svg>
<svg style="left:1870px;top:16.2px;" width="10" height="8" viewBox="0 0 10 8"><path d="M0.5 0.4L9.5 7.6M9.5 0.4L0.5 7.6" stroke="#e4e4e4" stroke-width="1.5" fill="none"/></svg>
<svg style="left:1592px;top:38px;" width="14" height="14" viewBox="0 0 14 14"><g fill="none" stroke="#d0d0d0" stroke-width="2.5"><path d="M7 0.2V13.8M0.2 7H13.8M2.2 2.2L11.8 11.8M11.8 2.2L2.2 11.8"/></g><circle cx="7" cy="7" r="4.7" fill="#d0d0d0"/><circle cx="7" cy="7" r="2.2" fill="#1f1f1f"/></svg>
<div style="left:1619px;top:37px;width:1px;height:16px;background:#4a4a4a;"></div>
<svg style="left:1627px;top:38px;" width="16" height="14" viewBox="0 0 16 14"><path d="M11.8 0.9H1.6V13.4H11.8" fill="none" stroke="#d6d6d6" stroke-width="1.2"/><path d="M5.2 7H14.4M10.6 3.2L14.4 7L10.6 10.8" fill="none" stroke="#6bbcf5" stroke-width="1.7"/></svg>
<div style="left:1655px;top:37px;width:1px;height:16px;background:#4a4a4a;"></div>
<svg style="left:1663.8px;top:37.4px;" width="14" height="14" viewBox="0 0 14 14"><circle cx="5.2" cy="5.2" r="4.3" fill="none" stroke="#d6d6d6" stroke-width="1.2"/><path d="M8.3 8.3L13 13" stroke="#d6d6d6" stroke-width="1.8"/><path d="M2.4 5.2H8M5.2 2.4V8" stroke="#57a8f0" stroke-width="1.1"/></svg>
<svg style="left:1691.6px;top:38px;" width="14" height="14" viewBox="0 0 14 14"><circle cx="5.2" cy="5.2" r="4.3" fill="none" stroke="#d6d6d6" stroke-width="1.2"/><path d="M8.3 8.3L13 13" stroke="#d6d6d6" stroke-width="1.8"/><path d="M2.4 5.2H8" stroke="#57a8f0" stroke-width="1.2"/></svg>
<svg style="left:1718px;top:38px;" width="14" height="15" viewBox="0 0 14 15"><path d="M3.1 8.6V14M6 10.3V14M9 4V14M11.9 8.2V14" stroke="#8a8a8a" stroke-width="1.9"/><path d="M1.6 2.2C2.6 0.4 5.6 0.6 5.4 2.8C5.3 4 3.8 4.3 3.7 5.6M1 0.8L1.5 2.6L3.3 2.2" fill="none" stroke="#8a8a8a" stroke-width="0.9"/></svg>
<span class="t" style="font-size:11.52px;color:#ffffff;height:17px;line-height:17px;top:61.9px;font-weight:700;left:1591px;letter-spacing:-0.301px;">Diagnostics session: 6 seconds</span>
<div style="left:1581px;top:80px;width:305px;height:1px;background:#4a4a4a;"></div>
<div style="left:1581px;top:103px;width:305px;height:1px;background:#4a4a4a;"></div>
<div style="left:1613px;top:81px;width:5px;height:22px;background:#f2f2f2;"></div>
<div style="left:1849px;top:81px;width:5px;height:22px;background:#f2f2f2;"></div>
<div style="left:1744px;top:81px;width:1px;height:22px;background:#4a4a4a;"></div>
<div style="left:1643px;top:98.5px;width:1px;height:4.5px;background:#4a4a4a;"></div>
<div style="left:1668px;top:98.5px;width:1px;height:4.5px;background:#4a4a4a;"></div>
<div style="left:1693px;top:98.5px;width:1px;height:4.5px;background:#4a4a4a;"></div>
<div style="left:1718.6px;top:98.5px;width:1px;height:4.5px;background:#4a4a4a;"></div>
<div style="left:1769px;top:98.5px;width:1px;height:4.5px;background:#4a4a4a;"></div>
<div style="left:1794px;top:98.5px;width:1px;height:4.5px;background:#4a4a4a;"></div>
<div style="left:1819.6px;top:98.5px;width:1px;height:4.5px;background:#4a4a4a;"></div>
<div style="left:1845px;top:98.5px;width:1px;height:4.5px;background:#4a4a4a;"></div>
<span class="t" style="font-size:11.52px;color:#f0f0f0;height:17px;line-height:17px;top:79.4px;left:1747.5px;letter-spacing:-0.289px;">10s</span>
<span class="t" style="font-size:11.52px;color:#ffffff;height:17px;line-height:17px;top:105.4px;left:1587px;letter-spacing:0.270px;">Add counter graphs by checking counters from counter</span>
<span class="t" style="font-size:11.52px;color:#ffffff;height:17px;line-height:17px;top:121.4px;left:1713.5px;letter-spacing:0.477px;">options</span>
<svg style="left:1586.3px;top:141.1px;" width="8.4" height="9.4" viewBox="0 0 8.4 9.4"><path d="M8.2 0.3V9.2H0.3Z" fill="#a6a6a6"/></svg>
<span class="t" style="font-size:11.52px;color:#ffffff;height:17px;line-height:17px;top:138.9px;font-weight:700;left:1598px;letter-spacing:-0.550px;transform-origin:0 50%;transform:scaleX(0.9996);">Events</span>
<svg style="left:1600px;top:165px;" width="9" height="9" viewBox="0 0 9 9"><path d="M1.5 0V9M6.5 0V9" stroke="#d0d0d0" stroke-width="2.6"/></svg>
<div style="left:1617px;top:156px;width:233px;height:23px;border:1px solid #555555;"></div>
<div style="left:1744px;top:157px;width:1px;height:21px;background:#4a4a4a;"></div>
<svg style="left:1586.3px;top:186.1px;" width="8.4" height="9.4" viewBox="0 0 8.4 9.4"><path d="M8.2 0.3V9.2H0.3Z" fill="#a6a6a6"/></svg>
<span class="t" style="font-size:11.52px;color:#ffffff;height:17px;line-height:17px;top:183.9px;font-weight:700;left:1598px;letter-spacing:-0.053px;">Process Memory (MB)</span>
<svg style="left:1740.6px;top:184.9px;" width="7" height="12" viewBox="0 0 7 12"><path d="M0.2 0H6.6L5.8 7.5L3.4 12L1 7.5Z" fill="#f6c552"/></svg>
<svg style="left:1757.9px;top:185px;" width="12.4" height="10.8" viewBox="0 0 12.4 10.8"><path d="M0 0H12.3L6.15 10.7Z" fill="#3a9bee"/></svg>
<span class="t" style="font-size:11.52px;color:#f0f0f0;height:17px;line-height:17px;top:183.9px;left:1771px;letter-spacing:-0.550px;transform-origin:0 50%;transform:scaleX(0.9106);">S</span>
<svg style="left:1787.6px;top:185px;" width="12.4" height="12.4" viewBox="0 0 12.4 12.4"><circle cx="6.15" cy="6.15" r="6.1" fill="#7bb2cf"/></svg>
<span class="t" style="font-size:11.52px;color:#f0f0f0;height:17px;line-height:17px;top:183.9px;left:1802.5px;letter-spacing:-0.055px;">P..</span>
<div style="left:1617px;top:203px;width:233px;height:70px;border:1px solid #555555;"></div>
<div style="left:1744px;top:204px;width:1px;height:68px;background:#4a4a4a;"></div>
<svg style="left:1617px;top:203px;" width="233" height="70" viewBox="0 0 233 70"><path d="M13.6 69V40.7L15.2 38.2L16.5 17.6L18.1 13.1L19.8 12.3H27.2L29.6 8.6L77 8.4L78.7 6.9H83V69Z" fill="#587c90"/><path d="M13.6 40.7L15.2 38.2L16.5 17.6L18.1 13.1L19.8 12.3H27.2L29.6 8.6L77 8.4L78.7 6.9H83" fill="none" stroke="#78aac4" stroke-width="1"/></svg>
<span class="t" style="font-size:11.52px;color:#f0f0f0;height:17px;line-height:17px;top:204.2px;left:1600px;letter-spacing:0.031px;">11</span>
<span class="t" style="font-size:11.52px;color:#f0f0f0;height:17px;line-height:17px;top:257.1px;left:1605px;letter-spacing:0.594px;">0</span>
<span class="t" style="font-size:11.52px;color:#f0f0f0;height:17px;line-height:17px;top:204.2px;left:1855.5px;letter-spacing:0.031px;">11</span>
<span class="t" style="font-size:11.52px;color:#f0f0f0;height:17px;line-height:17px;top:257.1px;left:1855.5px;letter-spacing:0.594px;">0</span>
<svg style="left:1586.3px;top:278.1px;" width="8.4" height="9.4" viewBox="0 0 8.4 9.4"><path d="M8.2 0.3V9.2H0.3Z" fill="#a6a6a6"/></svg>
<span class="t" style="font-size:11.52px;color:#ffffff;height:17px;line-height:17px;top:275.9px;font-weight:700;left:1598px;letter-spacing:-0.199px;">CPU (% of all processors)</span>
<div style="left:1617px;top:293px;width:233px;height:70px;border:1px solid #555555;"></div>
<div style="left:1744px;top:294px;width:1px;height:68px;background:#4a4a4a;"></div>
<svg style="left:1617px;top:293px;" width="233" height="70" viewBox="0 0 233 70"><path d="M13 69V67.5L15 67.8L16.6 64.8L18.2 67.8L26 68.5L40 68.8L51 68.2L54 66.3L56 68.2L66 68.8L77 68.4L80 67.3L82 69Z" fill="#587c90" stroke="#6b9ab3" stroke-width="0.6"/></svg>
<span class="t" style="font-size:11.52px;color:#f0f0f0;height:17px;line-height:17px;top:293.9px;left:1593.5px;letter-spacing:-0.359px;">100</span>
<span class="t" style="font-size:11.52px;color:#f0f0f0;height:17px;line-height:17px;top:347.9px;left:1605px;letter-spacing:0.594px;">0</span>
<span class="t" style="font-size:11.52px;color:#f0f0f0;height:17px;line-height:17px;top:293.9px;left:1855.5px;letter-spacing:-0.109px;">100</span>
<span class="t" style="font-size:11.52px;color:#f0f0f0;height:17px;line-height:17px;top:347.9px;left:1855.5px;letter-spacing:0.594px;">0</span>
<div style="left:1581px;top:384px;width:305px;height:3px;background:#3d3d3d;"></div>
<div style="left:1581px;top:409px;width:278px;height:2px;background:#8f8f8f;"></div>
<div style="left:1648px;top:392px;width:46px;height:18px;border:1px solid #3d3d3d;"></div>
<div style="left:1694px;top:392px;width:60px;height:18px;border:1px solid #3d3d3d;"></div>
<div style="left:1754px;top:392px;width:92px;height:18px;border:1px solid #3d3d3d;"></div>
<div style="left:1846px;top:392px;width:13px;height:18px;border:1px solid #3d3d3d;border-right:none;"></div>
<div style="left:1585px;top:391px;width:63px;height:20px;background:#1f1f1f;border:1px solid #a0a0a0;"></div>
<span class="t" style="font-size:11.52px;color:#ffffff;height:17px;line-height:17px;top:392.4px;left:1591px;letter-spacing:0.286px;">Summary</span>
<span class="t" style="font-size:11.52px;color:#c4c4c4;height:17px;line-height:17px;top:392.4px;left:1654.5px;letter-spacing:-0.344px;">Events</span>
<span class="t" style="font-size:11.52px;color:#c4c4c4;height:17px;line-height:17px;top:392.4px;left:1700.5px;letter-spacing:0.109px;">Counters</span>
<span class="t" style="font-size:11.52px;color:#c4c4c4;height:17px;line-height:17px;top:392.4px;left:1760.5px;letter-spacing:0.129px;">Memory Usage</span>
<span class="t" style="font-size:11.52px;color:#c4c4c4;height:17px;line-height:17px;top:392.4px;left:1852.5px;letter-spacing:-0.550px;transform-origin:0 50%;transform:scaleX(0.7805);">C</span>
<svg style="left:1862px;top:396px;" width="7" height="10" viewBox="0 0 7 10"><path d="M6.5 0.5V9.5L0.5 5Z" fill="#f0f0f0"/></svg>
<svg style="left:1876px;top:396px;" width="7" height="10" viewBox="0 0 7 10"><path d="M0.5 0.5V9.5L6.5 5Z" fill="#f0f0f0"/></svg>
<div style="left:1581px;top:434px;width:305px;height:1px;background:#3a3a3a;"></div>
<div style="left:1581px;top:463px;width:305px;height:1px;background:#3a3a3a;"></div>
<div style="left:1581px;top:486px;width:305px;height:1px;background:#3a3a3a;"></div>
<div style="left:1581px;top:515px;width:305px;height:1px;background:#3a3a3a;"></div>
<div style="left:1581px;top:538px;width:305px;height:1px;background:#3a3a3a;"></div>
<div style="left:1581px;top:567px;width:305px;height:1px;background:#3a3a3a;"></div>
<div style="left:1581px;top:590px;width:305px;height:1px;background:#3a3a3a;"></div>
<span class="t" style="font-size:11.52px;color:#ffffff;height:17px;line-height:17px;top:415.5px;font-weight:700;left:1590px;letter-spacing:-0.453px;">Events</span>
<span class="t" style="font-size:11.52px;color:#ffffff;height:17px;line-height:17px;top:467.5px;font-weight:700;left:1590px;letter-spacing:-0.207px;">.NET Counters</span>
<span class="t" style="font-size:11.52px;color:#ffffff;height:17px;line-height:17px;top:519.5px;font-weight:700;left:1590px;letter-spacing:0.143px;">Memory Usage</span>
<span class="t" style="font-size:11.52px;color:#ffffff;height:17px;line-height:17px;top:571.5px;font-weight:700;left:1590px;letter-spacing:-0.222px;">CPU Usage</span>
<span class="t" style="font-size:11.52px;color:#ffffff;height:17px;line-height:17px;top:441.4px;left:1617px;letter-spacing:0.031px;">Show Events (0 of 0)</span>
<span class="t" style="font-size:11.52px;color:#ffffff;height:17px;line-height:17px;top:493.4px;left:1617px;letter-spacing:0.112px;">View Performance Counters</span>
<span class="t" style="font-size:11.52px;color:#ffffff;height:17px;line-height:17px;top:545.4px;left:1617px;letter-spacing:0.026px;">Take Snapshot</span>
<span class="t" style="font-size:11.52px;color:#ffffff;height:17px;line-height:17px;top:597.4px;left:1617px;">Record CPU Profile</span>
<svg style="left:1597px;top:445.8px;" width="12" height="6" viewBox="0 0 12 6"><path d="M2.7 0.6L0.6 3L2.7 5.4L4.8 3Z M5.6 0.8L7.6 3L5.6 5.2M8.6 0.8L10.6 3L8.6 5.2" fill="none" stroke="#9a9a9a" stroke-width="0.9"/></svg>
<svg style="left:1597px;top:497.8px;" width="12" height="6" viewBox="0 0 12 6"><path d="M2.7 0.6L0.6 3L2.7 5.4L4.8 3Z M5.6 0.8L7.6 3L5.6 5.2M8.6 0.8L10.6 3L8.6 5.2" fill="none" stroke="#9a9a9a" stroke-width="0.9"/></svg>
<svg style="left:1597px;top:548px;" width="12" height="10" viewBox="0 0 12 10"><path d="M0.5 1.5H3.5L4.2 0.5H7.8L8.5 1.5H11.5V9.5H0.5Z" fill="#c8c8c8"/><circle cx="6" cy="5.5" r="2.2" fill="none" stroke="#1f1f1f" stroke-width="1"/></svg>
<svg style="left:1598px;top:600px;" width="10" height="10" viewBox="0 0 10 10"><circle cx="5" cy="5" r="4.5" fill="#d0d0d0"/></svg>
<div style="left:1912px;top:9px;width:5px;height:89px;background:#333333;"></div>
<div style="left:1912px;top:104px;width:5px;height:70px;background:#333333;"></div>
<span class="t" style="font-size:11.52px;color:#bcbcbc;height:14px;line-height:14px;top:2.4px;left:1893.5px;letter-spacing:0.062px;transform-origin:0 0;transform:translate(14px,7px) rotate(90deg);">Solution Explorer</span>
<span class="t" style="font-size:11.52px;color:#bcbcbc;height:14px;line-height:14px;top:103.4px;left:1893.5px;letter-spacing:-0.022px;transform-origin:0 0;transform:translate(14px,7px) rotate(90deg);">Git Changes</span>
<div style="left:4px;top:722px;width:936px;height:171px;background:#1f1f1f;border:1px solid #3d3d3d;"></div>
<span class="t" style="font-size:11.52px;color:#c4c4c4;height:17px;line-height:17px;top:725.9px;left:9px;letter-spacing:0.387px;">Autos</span>
<svg style="left:889.9px;top:731.2px;" width="8.2" height="4.4" viewBox="0 0 8.2 4.4"><path d="M0 0H8.2L4.1 4.4Z" fill="#e4e4e4"/></svg>
<svg style="left:906.6500000000001px;top:727.4000000000001px;" width="8" height="12" viewBox="0 0 8 12"><path d="M1.5 0.4H6.8V6.3H7.7V7.6H4.6V11.7H3.5V7.6H0.4V6.3H1.5Z M2.7 1.3V6.3H4.8V1.3Z" fill="#e8e8e8" fill-rule="evenodd"/></svg>
<svg style="left:922px;top:729.2px;" width="10" height="8" viewBox="0 0 10 8"><path d="M0.5 0.4L9.5 7.6M9.5 0.4L0.5 7.6" stroke="#e4e4e4" stroke-width="1.5" fill="none"/></svg>
<div style="left:7px;top:746px;width:221px;height:21px;background:#333333;border:1px solid #434343;"></div>
<span class="t" style="font-size:11.52px;color:#e0e0e0;height:17px;line-height:17px;top:748.9px;left:12px;letter-spacing:-0.048px;">Search (Ctrl+E)</span>
<svg style="left:200px;top:750px;" width="13" height="13" viewBox="0 0 13 13"><circle cx="8" cy="5" r="3.6" fill="none" stroke="#e0e0e0" stroke-width="1.7"/><path d="M5.4 7.6L1 12" stroke="#e0e0e0" stroke-width="2"/></svg>
<svg style="left:218px;top:755px;" width="7" height="4" viewBox="0 0 7 4"><path d="M0 0H6.5L3.25 3.5Z" fill="#d0d0d0"/></svg>
<svg style="left:238px;top:751.5px;" width="13" height="11" viewBox="0 0 13 11"><path d="M12.8 5.5H1M5.6 0.8L1 5.5L5.6 10.2" stroke="#585858" stroke-width="1.1" fill="none"/></svg>
<svg style="left:261px;top:751.5px;" width="13" height="11" viewBox="0 0 13 11"><path d="M0.2 5.5H12M7.4 0.8L12 5.5L7.4 10.2" stroke="#585858" stroke-width="1.1" fill="none"/></svg>
<span class="t" style="font-size:11.52px;color:#707070;height:17px;line-height:17px;top:749.9px;left:281px;letter-spacing:-0.094px;">Search Depth:</span>
<div style="left:360px;top:747px;width:40px;height:20px;background:#333333;border:1px solid #3c3c3c;"></div>
<svg style="left:390px;top:756px;" width="7" height="4" viewBox="0 0 7 4"><path d="M0 0H6.5L3.25 3.5Z" fill="#6a6a6a"/></svg>
<div style="left:5px;top:789px;width:917px;height:1px;background:#343434;"></div>
<div style="left:13px;top:770px;width:1px;height:19px;background:#303030;"></div>
<div style="left:316px;top:770px;width:1px;height:19px;background:#303030;"></div>
<div style="left:770px;top:770px;width:1px;height:19px;background:#303030;"></div>
<span class="t" style="font-size:11.52px;color:#8c8c8c;height:17px;line-height:17px;top:771.9px;left:19px;letter-spacing:0.427px;">Name</span>
<span class="t" style="font-size:11.52px;color:#8c8c8c;height:17px;line-height:17px;top:771.9px;left:321.5px;letter-spacing:0.348px;">Value</span>
<span class="t" style="font-size:11.52px;color:#8c8c8c;height:17px;line-height:17px;top:771.9px;left:776px;letter-spacing:0.344px;">Type</span>
<div style="left:922px;top:770px;width:17px;height:122px;background:#303030;"></div>
<svg style="left:926px;top:775.5px;" width="10" height="6" viewBox="0 0 10 6"><path d="M0 5.2H9.2L4.6 0Z" fill="#808080"/></svg>
<svg style="left:926px;top:882px;" width="10" height="6" viewBox="0 0 10 6"><path d="M0 0H9.2L4.6 5.2Z" fill="#808080"/></svg>
<div style="left:926px;top:787px;width:9px;height:89px;background:#3e3e3e;"></div>
<div style="left:4px;top:892px;width:44px;height:22px;background:#1f1f1f;border:1px solid #3d3d3d;border-top:none;"></div>
<span class="t" style="font-size:11.52px;color:#ffffff;height:17px;line-height:17px;top:894.9px;left:10px;letter-spacing:0.512px;">Autos</span>
<span class="t" style="font-size:11.52px;color:#c4c4c4;height:17px;line-height:17px;top:894.9px;left:53px;letter-spacing:-0.059px;">Locals</span>
<span class="t" style="font-size:11.52px;color:#c4c4c4;height:17px;line-height:17px;top:894.9px;left:98px;letter-spacing:0.115px;">Watch 1</span>
<div style="left:946px;top:722px;width:942px;height:171px;background:#1f1f1f;border:1px solid #3d3d3d;"></div>
<span class="t" style="font-size:11.52px;color:#c4c4c4;height:17px;line-height:17px;top:725.9px;left:951px;letter-spacing:-0.023px;">Developer PowerShell</span>
<svg style="left:1838.4px;top:731.2px;" width="8.2" height="4.4" viewBox="0 0 8.2 4.4"><path d="M0 0H8.2L4.1 4.4Z" fill="#e4e4e4"/></svg>
<svg style="left:1854.95px;top:727.4000000000001px;" width="8" height="12" viewBox="0 0 8 12"><path d="M1.5 0.4H6.8V6.3H7.7V7.6H4.6V11.7H3.5V7.6H0.4V6.3H1.5Z M2.7 1.3V6.3H4.8V1.3Z" fill="#e8e8e8" fill-rule="evenodd"/></svg>
<svg style="left:1870.7px;top:729.2px;" width="10" height="8" viewBox="0 0 10 8"><path d="M0.5 0.4L9.5 7.6M9.5 0.4L0.5 7.6" stroke="#e4e4e4" stroke-width="1.5" fill="none"/></svg>
<svg style="left:956.2px;top:751px;" width="13" height="13" viewBox="0 0 13 13"><path d="M6.5 0V13M0 6.5H13" stroke="#6fcf6f" stroke-width="1.2"/></svg>
<span class="t" style="font-size:11.52px;color:#e6e6e6;height:17px;line-height:17px;top:749.9px;left:975px;letter-spacing:-0.023px;">Developer PowerShell</span>
<svg style="left:1094.6px;top:756px;" width="7" height="4" viewBox="0 0 7 4"><path d="M0 0H6.5L3.25 3.5Z" fill="#d0d0d0"/></svg>
<div style="left:1107px;top:748px;width:1px;height:20px;background:#3d3d3d;"></div>
<svg style="left:1116.2px;top:751px;" width="14" height="14" viewBox="0 0 14 14"><rect x="4.6" y="0.6" width="8.8" height="9.8" fill="none" stroke="#d6d6d6" stroke-width="1.2"/><rect x="0.6" y="3.6" width="7.8" height="9.8" fill="#1f1f1f" stroke="#d6d6d6" stroke-width="1.2"/></svg>
<svg style="left:1139.2px;top:750px;" width="13" height="15" viewBox="0 0 13 15"><rect x="0.6" y="2.6" width="10.8" height="11.8" fill="none" stroke="#4e4e4e" stroke-width="1.2"/><rect x="3.5" y="0.6" width="5" height="3.4" fill="#4e4e4e"/><rect x="6.6" y="8.6" width="5.8" height="5.8" fill="#1f1f1f" stroke="#4e4e4e" stroke-width="1.2"/></svg>
<div style="left:1159px;top:748px;width:1px;height:20px;background:#3d3d3d;"></div>
<svg style="left:1168px;top:751px;" width="14" height="14" viewBox="0 0 14 14"><g fill="none" stroke="#d6d6d6" stroke-width="1.1"><circle cx="7" cy="7" r="5.4" stroke-dasharray="2.1 1.3" stroke-width="2.2"/><circle cx="7" cy="7" r="4"/><circle cx="7" cy="7" r="1.6"/><path d="M7 3V5.4M7 8.6V11M3 7H5.4M8.6 7H11"/></g></svg>
<span class="t m" style="font-size:11.67px;color:#f0f0f0;height:16px;line-height:16px;top:772.6px;left:946.5px;-webkit-text-stroke:0.2px #f0f0f0;">PS C:\Users\barry\source\repos&gt;</span>
<div style="left:1171px;top:772px;width:7px;height:16px;background:#e8e8e8;"></div>
<div style="left:1870.3px;top:772px;width:16.7px;height:120px;background:#2e2e2e;"></div>
<svg style="left:1874px;top:778px;" width="10" height="6" viewBox="0 0 10 6"><path d="M0 5.2H9.2L4.6 0Z" fill="#a0a0a0"/></svg>
<svg style="left:1874px;top:882px;" width="10" height="6" viewBox="0 0 10 6"><path d="M0 0H9.2L4.6 5.2Z" fill="#a0a0a0"/></svg>
<div style="left:1874.3px;top:821px;width:8.6px;height:54.7px;background:#4d4d4d;"></div>
<div style="left:946px;top:892px;width:126px;height:22px;background:#1f1f1f;border:1px solid #3d3d3d;border-top:none;"></div>
<span class="t" style="font-size:11.52px;color:#ffffff;height:17px;line-height:17px;top:894.9px;left:952px;">Developer PowerShell</span>
<span class="t" style="font-size:11.52px;color:#c4c4c4;height:17px;line-height:17px;top:894.9px;left:1078px;letter-spacing:-0.149px;">Call Stack</span>
<span class="t" style="font-size:11.52px;color:#c4c4c4;height:17px;line-height:17px;top:894.9px;left:1141px;letter-spacing:0.069px;">Breakpoints</span>
<span class="t" style="font-size:11.52px;color:#c4c4c4;height:17px;line-height:17px;top:894.9px;left:1215px;letter-spacing:0.036px;">Exception Settings</span>
<span class="t" style="font-size:11.52px;color:#c4c4c4;height:17px;line-height:17px;top:894.9px;left:1323.5px;letter-spacing:0.517px;">Command Window</span>
<span class="t" style="font-size:11.52px;color:#c4c4c4;height:17px;line-height:17px;top:894.9px;left:1439.5px;letter-spacing:0.439px;">Immediate Window</span>
<span class="t" style="font-size:11.52px;color:#c4c4c4;height:17px;line-height:17px;top:894.9px;left:1556px;letter-spacing:0.684px;">Output</span>
<span class="t" style="font-size:11.52px;color:#c4c4c4;height:17px;line-height:17px;top:894.9px;left:1606px;letter-spacing:-0.080px;">Error List</span>
<div style="left:0px;top:920px;width:1917px;height:24px;background:#8a1c2e;"></div>
<div style="left:0px;top:944px;width:1917px;height:3px;background:#1a504b;"></div>
<svg style="left:2px;top:924px;" width="17" height="16" viewBox="0 0 17 16"><path d="M0.7 0.7H15.3V11.3H10.2L8 13.6L5.8 11.3H0.7Z" fill="#9c3346" stroke="#ffffff" stroke-width="1.2"/></svg>
<span class="t" style="font-size:11.52px;color:#ffffff;height:17px;line-height:17px;top:923.9px;left:26px;letter-spacing:-0.324px;">Ready</span>
<svg style="left:1567px;top:925px;" width="12" height="14" viewBox="0 0 12 14"><path d="M3 13V1M0.5 3.7L3 1L5.5 3.7M9 1V13M6.5 10.3L9 13L11.5 10.3" stroke="#ffffff" stroke-width="1.2" fill="none"/></svg>
<span class="t" style="font-size:11.52px;color:#ffffff;height:17px;line-height:17px;top:923.9px;left:1587.5px;letter-spacing:0.145px;">0 / 0</span>
<svg style="left:1616px;top:929px;" width="8" height="5" viewBox="0 0 8 5"><path d="M0 4.5H8L4 0Z" fill="#ffffff"/></svg>
<svg style="left:1648px;top:925px;" width="13" height="13" viewBox="0 0 13 13"><path d="M1 12L2 8.5L9.5 1L12 3.5L4.5 11Z M1 12L4.5 11" stroke="#ffffff" stroke-width="1.1" fill="none"/></svg>
<span class="t" style="font-size:11.52px;color:#ffffff;height:17px;line-height:17px;top:923.9px;left:1667.5px;letter-spacing:0.594px;">2</span>
<svg style="left:1697px;top:924px;" width="15" height="16" viewBox="0 0 15 16"><circle cx="3" cy="3" r="2" fill="none" stroke="#fff" stroke-width="1.2"/><circle cx="3" cy="13" r="2" fill="none" stroke="#fff" stroke-width="1.2"/><circle cx="11" cy="5" r="2" fill="none" stroke="#fff" stroke-width="1.2"/><path d="M3 5V11M11 7C11 9.5 3 8 3 11" stroke="#fff" stroke-width="1.2" fill="none"/><circle cx="10.5" cy="12" r="3.5" fill="#fff"/><path d="M10.5 14V10.3M9 11.5L10.5 10L12 11.5" stroke="#8a1c2e" stroke-width="1" fill="none"/></svg>
<span class="t" style="font-size:11.52px;color:#ffffff;height:17px;line-height:17px;top:923.9px;left:1718.5px;letter-spacing:0.377px;">main</span>
<svg style="left:1751.2px;top:929px;" width="8" height="5" viewBox="0 0 8 5"><path d="M0 4.5H8L4 0Z" fill="#ffffff"/></svg>
<svg style="left:1788px;top:924px;" width="16" height="16" viewBox="0 0 16 16"><path d="M0.6 1.5H12.4M1.5 1.5V13.5H7M11.5 1.5V7M4 4V6.5H6.5V4M9 4V6" stroke="#fff" stroke-width="1.2" fill="none"/><circle cx="11" cy="11.5" r="3.8" fill="#fff"/><path d="M11 13.6V9.8M9.5 11L11 9.5L12.5 11" stroke="#8a1c2e" stroke-width="1" fill="none"/></svg>
<span class="t" style="font-size:11.52px;color:#ffffff;height:17px;line-height:17px;top:923.9px;left:1809.7px;letter-spacing:0.207px;">weewoo</span>
<svg style="left:1859.2px;top:929px;" width="8" height="5" viewBox="0 0 8 5"><path d="M0 4.5H8L4 0Z" fill="#ffffff"/></svg>
<svg style="left:1887.3px;top:924px;" width="14" height="16" viewBox="0 0 14 16"><path d="M2 11.5C3.5 10 3 8 3.5 5.5A3.6 3.6 0 0 1 10.5 5.5C11 8 10.5 10 12 11.5Z M5.5 13.5A1.6 1.6 0 0 0 8.5 13.5" stroke="#fff" stroke-width="1.1" fill="none"/></svg>
<svg style="left:1894.6px;top:930.2px;" width="13" height="13" viewBox="0 0 13 13"><circle cx="6.5" cy="6.5" r="6.3" fill="#f76c7c"/><text x="4" y="10" font-family="Liberation Sans" font-size="10" fill="#1f1f1f">1</text></svg>
</body></html>
